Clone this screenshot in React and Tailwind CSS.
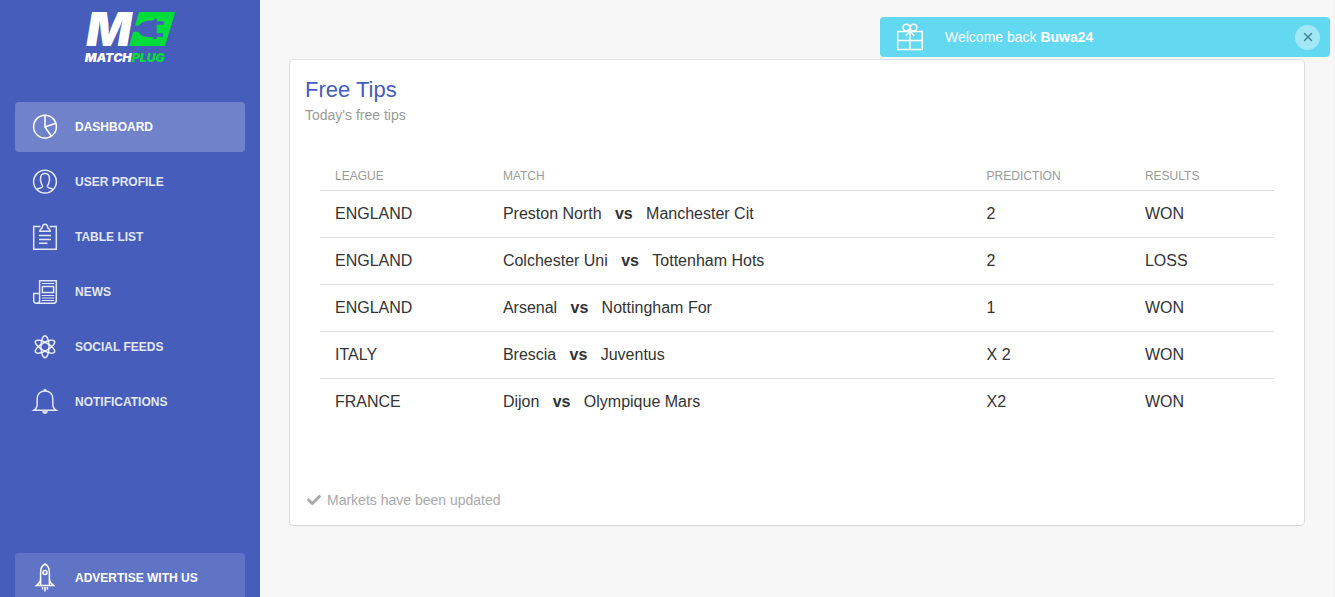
import React, { useState } from 'react';
import { FaCheck } from 'react-icons/fa';
import { X } from 'lucide-react';

const Icon = ({ children }) => (
  <svg
    viewBox="0 0 30 30"
    className="w-[30px] h-[30px] shrink-0"
    fill="none"
    stroke="currentColor"
    strokeWidth="1.5"
    aria-hidden="true"
  >
    {children}
  </svg>
);

const PieIcon = () => (
  <Icon>
    <circle cx="15" cy="14.7" r="11.4" />
    <path d="M15 3.3V15L25.8 11.3M15 15L21.3 24.2" />
  </Icon>
);

const UserIcon = () => (
  <Icon>
    <circle cx="15" cy="14.7" r="11.4" />
    <path d="M6.8 22.6C8 21.2 12.6 21.3 12.6 19.6C12.6 17.8 10.9 17.4 10.9 14.6C10 13.6 10.6 12.4 10.6 11.2C10.4 8 12.2 6.6 15 6.6S19.6 8 19.4 11.2C19.4 12.4 20 13.6 19.1 14.6C19.1 17.4 17.4 17.8 17.4 19.6C17.4 21.3 22 21.2 23.2 22.6" />
  </Icon>
);

const ClipboardIcon = () => (
  <Icon>
    <path d="M10.5 4.5H3.7V27.3H26.3V4.5H19.5" />
    <path d="M9.8 9.2C9.8 6.8 12 7.2 12.4 5.2C12.5 3.2 13.4 2.2 15 2.2S17.5 3.2 17.6 5.2C18 7.2 20.2 6.8 20.2 9.2Z" />
    <path d="M9 13.5H21M9 17.5H21M9 21.2H17.5" />
  </Icon>
);

const NewsIcon = () => (
  <Icon>
    <path d="M9.6 22.5V3.7H26.3V23.5C26.3 25.4 25.4 26.3 23.6 26.3H6.4C4.6 26.3 3.7 25.4 3.7 23.6V16.5H9.6V23.6C9.6 25.4 8.6 26.3 6.8 26.3" />
    <path d="M11.8 6.5H24.2M11.8 18.5H24.2M11.8 21H24.2M11.8 23.5H24.2" strokeWidth="1" />
    <path d="M12.4 9.6H23.6V15.6H12.4Z" />
  </Icon>
);

const AtomIcon = () => (
  <Icon>
    <ellipse cx="15" cy="14.7" rx="4" ry="11" />
    <ellipse cx="15" cy="14.7" rx="4" ry="11" transform="rotate(60 15 14.7)" />
    <ellipse cx="15" cy="14.7" rx="4" ry="11" transform="rotate(-60 15 14.7)" />
  </Icon>
);

const BellIcon = () => (
  <Icon>
    <path d="M4 23.2C6.6 21.6 7.2 20.2 7.2 16.4V11.6C7.2 7 10.4 3.9 15 3.9S22.8 7 22.8 11.6V16.4C22.8 20.2 23.4 21.6 26 23.2Z" />
    <path d="M13.6 3.6A1.4 1.4 0 0 1 16.4 3.6ZM12.6 24.4H17.4C17.2 26 16.4 26.6 15 26.6S12.8 26 12.6 24.4Z" fill="currentColor" strokeWidth="0.6" />
  </Icon>
);

const RocketIcon = () => (
  <Icon>
    <path d="M10.6 22.6V9.4C10.6 5.4 12.4 2.4 15 1C17.6 2.4 19.4 5.4 19.4 9.4V22.6" />
    <path d="M10.6 16.6C10.6 19 8.6 20.6 6.4 22.6H23.6C21.4 20.6 19.4 19 19.4 16.6" />
    <circle cx="15" cy="9.6" r="2" />
    <path d="M12.6 24V26.6M15 24V28.6M17.4 24V26.6" />
  </Icon>
);

const GiftIcon = () => (
  <Icon>
    <path d="M2.7 9.4H27.3V27.4H2.7ZM2.7 18.4H27.3M15 9.4V27.4" />
    <circle cx="11.4" cy="5.6" r="3.3" />
    <circle cx="18.6" cy="5.6" r="3.3" />
    <path d="M15 8.6L11 13.8M15 8.6L19 13.8" />
  </Icon>
);

const Logo = () => (
  <svg viewBox="42 0 276 198" className="w-[92px] h-[66px]" role="img" aria-label="MatchPlug">
    <path d="M207 36H316L285 138H177Z" fill="#00dc3c" />
    {/* Plug and cord */}
    <path d="M190 77H207C213 67 226 62 252 61V56H260V64H281V74H260V100H279V110H260V117H250V112C224 112 211 106 205 95H186Z" fill="#465dbb" />
    <text fill="#fff" fontFamily="Inter, sans-serif" fontWeight="900" fontStyle="italic">
      <tspan x="49" y="138" fontSize="142">M</tspan>
      <tspan x="44" y="185" fontSize="37">MATCH</tspan>
      <tspan fontSize="37" fill="#00dc3c">PLUG</tspan>
    </text>
  </svg>
);

const navItems = [
  { name: 'Dashboard', icon: PieIcon, active: true },
  { name: 'User Profile', icon: UserIcon },
  { name: 'Table List', icon: ClipboardIcon },
  { name: 'News', icon: NewsIcon },
  { name: 'Social Feeds', icon: AtomIcon },
  { name: 'Notifications', icon: BellIcon },
];

const tips = [
  { league: 'ENGLAND', home: 'Preston North', away: 'Manchester Cit', prediction: '2', result: 'WON' },
  { league: 'ENGLAND', home: 'Colchester Uni', away: 'Tottenham Hots', prediction: '2', result: 'LOSS' },
  { league: 'ENGLAND', home: 'Arsenal', away: 'Nottingham For', prediction: '1', result: 'WON' },
  { league: 'ITALY', home: 'Brescia', away: 'Juventus', prediction: 'X 2', result: 'WON' },
  { league: 'FRANCE', home: 'Dijon', away: 'Olympique Mars', prediction: 'X2', result: 'WON' },
];

const Sidebar = () => (
  <aside className="w-[260px] h-screen sticky top-0 shrink-0 overflow-hidden bg-[#465dbb] text-white px-[15px]">
    <a href="#" className="flex justify-center">
      <Logo />
    </a>
    <nav className="mt-9 flex flex-col gap-[5px] text-xs font-bold uppercase">
      {navItems.map(({ name, icon: NavIcon, active }) => (
        <a
          key={name}
          href="#"
          className={`flex items-center gap-[15px] h-[50px] px-[15px] rounded shrink-0 ${
            active ? 'bg-white/23' : 'text-white/85 hover:bg-white/10'
          }`}
        >
          <NavIcon />
          {name}
        </a>
      ))}
      <a href="#" className="flex items-center gap-[15px] h-[50px] px-[15px] mt-[121px] rounded shrink-0 bg-white/14">
        <RocketIcon />
        Advertise with us
      </a>
    </nav>
  </aside>
);

const TipsTable = () => (
  <table className="w-full table-fixed text-left text-base text-[#333]">
    <thead>
      <tr className="border-b border-[#ddd] text-xs uppercase text-[#9a9a9a]">
        <th className="w-[17.6%] font-normal pl-[15px] pb-[6px]">League</th>
        <th className="w-[50.7%] font-normal pl-[15px] pb-[6px]">Match</th>
        <th className="w-[16.6%] font-normal pl-[15px] pb-[6px]">Prediction</th>
        <th className="font-normal pl-[15px] pb-[6px]">Results</th>
      </tr>
    </thead>
    <tbody>
      {tips.map((tip) => (
        <tr key={tip.home} className="h-[47px] border-b border-[#ddd] last:border-b-0">
          <td className="pl-[15px]">{tip.league}</td>
          <td className="pl-[15px]">
            {tip.home}
            <b>&nbsp;&nbsp;&nbsp;vs&nbsp;&nbsp;&nbsp;</b>
            {tip.away}
          </td>
          <td className="pl-[15px]">{tip.prediction}</td>
          <td className="pl-[15px]">{tip.result}</td>
        </tr>
      ))}
    </tbody>
  </table>
);

const App = () => {
  const [showAlert, setShowAlert] = useState(true);

  return (
    <div className="flex min-h-screen bg-[#f7f7f7] border-r border-[#f0f0f0] font-['Liberation_Sans',Arial,sans-serif]">
      <Sidebar />

      <main className="flex-1 min-w-0 px-[30px] pt-[60px] pb-[30px]">
        <section className="bg-white rounded shadow-[0_1px_2px_rgba(0,0,0,0.05),0_0_0_1px_rgba(63,63,68,0.13)]">
          <header className="px-[15px] pt-[15px]">
            <h4 className="text-[22px] leading-[30px] text-[#465dbb]">Free Tips</h4>
            <p className="text-sm text-[#9a9a9a]">Today's free tips</p>
          </header>
          <div className="px-[30px] pt-[43px]">
            <TipsTable />
          </div>
          <footer className="flex items-center gap-[6px] px-[17px] pt-16 pb-[15px] text-sm text-[#a9a9a9]">
            <FaCheck size={14} />
            Markets have been updated
          </footer>
        </section>
      </main>

      {/* Welcome notification */}
      {showAlert && (
        <div
          role="alert"
          className="fixed top-[17px] right-[5px] w-[450px] h-10 flex items-center pl-[15px] pr-[10px] rounded bg-[#63d8f1] text-white text-sm"
        >
          <GiftIcon />
          <p className="ml-5 flex-1">
            Welcome back <b>Buwa24</b>
          </p>
          <button
            type="button"
            aria-label="Close"
            onClick={() => setShowAlert(false)}
            className="w-[25px] h-[25px] rounded-full bg-white/40 text-[#3f8796] flex items-center justify-center"
          >
            <X size={14} strokeWidth={2.5} />
          </button>
        </div>
      )}
    </div>
  );
};

export default App;
